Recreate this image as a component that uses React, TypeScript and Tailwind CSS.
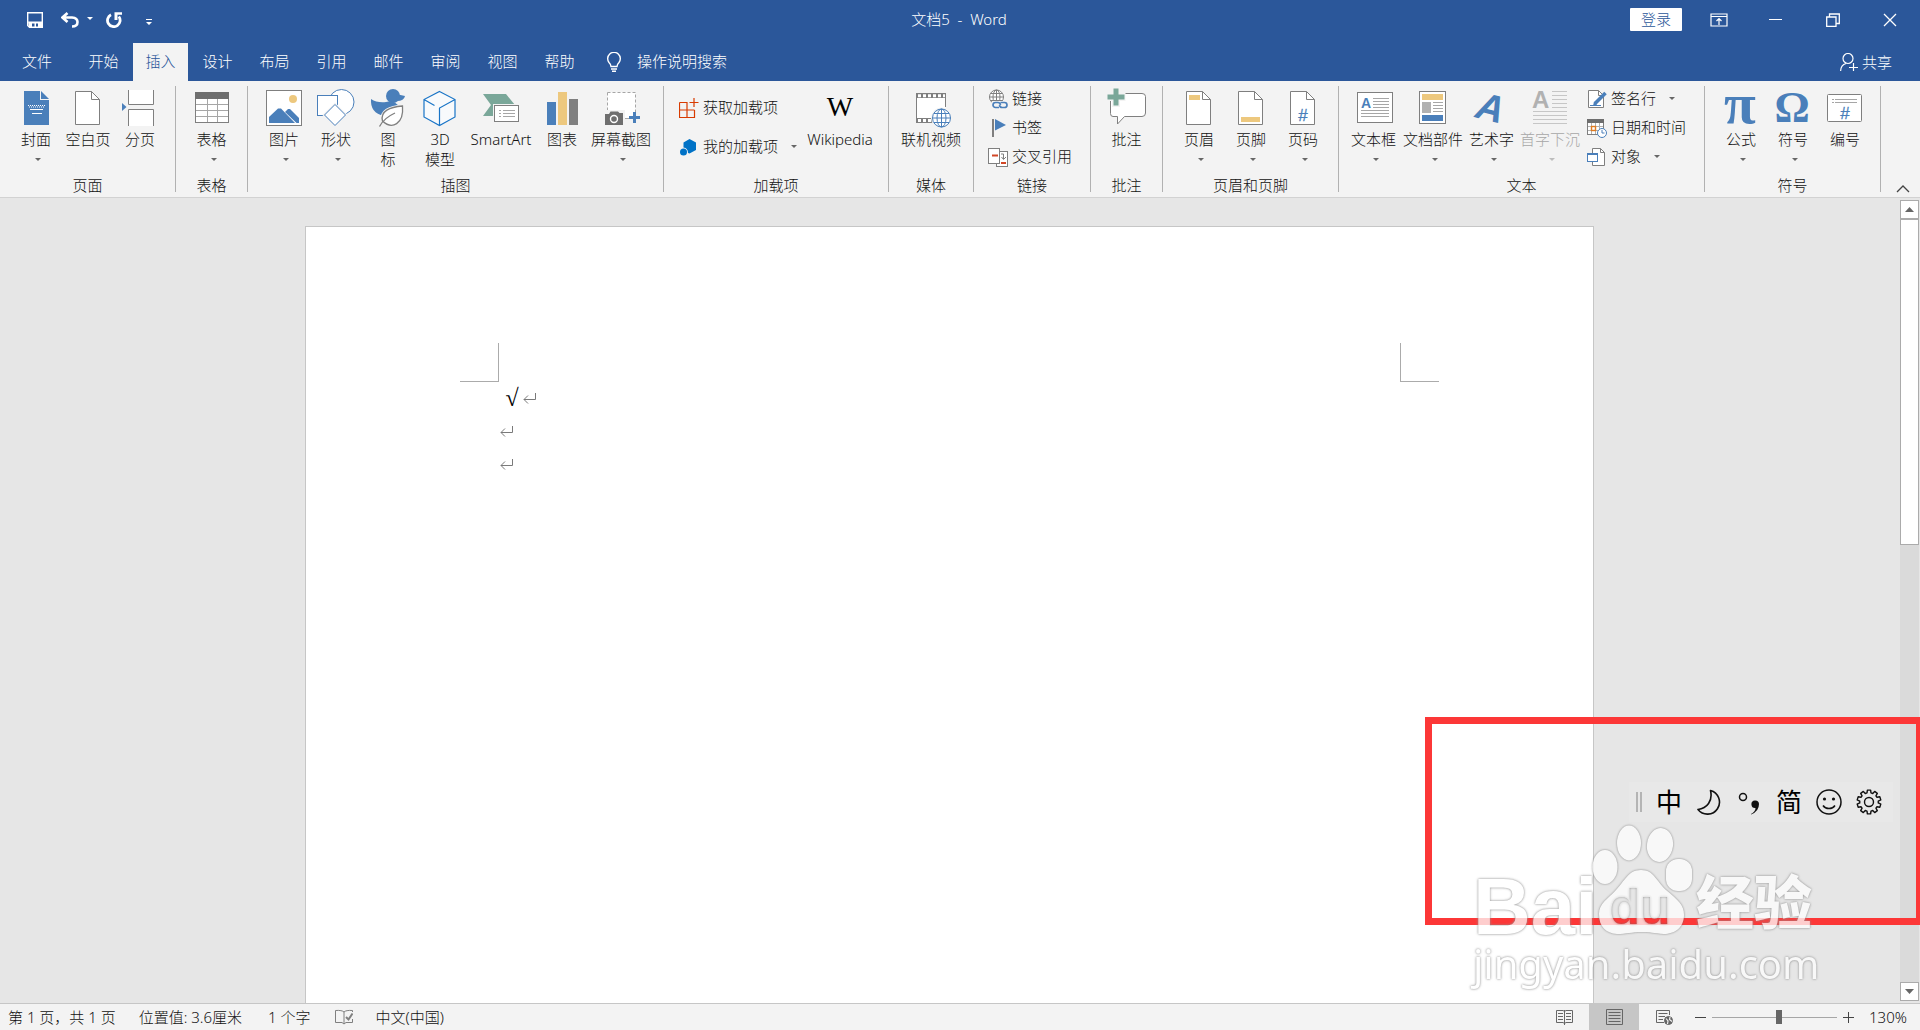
import React, { useState } from "react";

const BLUE = "#4a7fba";
const GREY = "#7f7f7f";
const GOLD = "#edc87e";
const GREEN = "#7aa799";

function Ico({ children }: { children: React.ReactNode }) {
  return (
    <svg viewBox="0 0 40 40" className="h-10 w-10 shrink-0 overflow-visible" fill="none" aria-hidden="true">
      {children}
    </svg>
  );
}

function SmallIco({ children }: { children: React.ReactNode }) {
  return (
    <svg viewBox="0 0 20 20" className="h-5 w-5 shrink-0" fill="none" aria-hidden="true">
      {children}
    </svg>
  );
}

function Caret({ light = false }: { light?: boolean }) {
  return (
    <svg viewBox="0 0 6 3" className="h-[3px] w-1.5 shrink-0" aria-hidden="true">
      <path d="M0 0h6L3 3z" fill={light ? "#bdbdbd" : "#666"} />
    </svg>
  );
}

function BigButton({
  icon,
  label,
  width = "w-[52px]",
  caret = false,
  disabled = false,
}: {
  icon: React.ReactNode;
  label: React.ReactNode;
  width?: string;
  caret?: boolean;
  disabled?: boolean;
}) {
  return (
    <button
      type="button"
      disabled={disabled}
      className={`${width} flex shrink-0 flex-col items-center self-start pt-1.5 leading-5 whitespace-nowrap ${
        disabled ? "text-[#a6a6a6]" : ""
      }`}
    >
      {icon}
      <span className="mt-0.5">{label}</span>
      {caret && (
        <span className="mt-[9px] flex pl-1">
          <Caret light={disabled} />
        </span>
      )}
    </button>
  );
}

function SmallButton({ icon, label, caret = false }: { icon: React.ReactNode; label: string; caret?: boolean }) {
  return (
    <button type="button" className="flex h-[29px] items-center whitespace-nowrap">
      {icon}
      <span className="ml-1">{label}</span>
      {caret && (
        <span className="ml-[13px] flex">
          <Caret />
        </span>
      )}
    </button>
  );
}

function Group({
  title,
  width,
  align = "pl-2.5",
  children,
}: {
  title: string;
  width: string;
  align?: string;
  children: React.ReactNode;
}) {
  return (
    <>
      <section aria-label={title} className={`${width} flex shrink-0 flex-col pb-0.5`}>
        <div className={`flex min-h-[94px] ${align}`}>{children}</div>
        <div className="text-center leading-5">{title}</div>
      </section>
      <div className="my-[5px] w-px shrink-0 bg-[#b1b1b1]" />
    </>
  );
}

function PageShape({ children }: { children?: React.ReactNode }) {
  return (
    <Ico>
      <path d="M7.500 4.500H23.500L31.500 12.500V37.500H7.500Z" fill="#fff" stroke={GREY} />
      <path d="M23.500 4.500V12.500H31.500" stroke={GREY} />
      {children}
    </Ico>
  );
}

const coverIcon = (
  <Ico>
    <path d="M8 4H24V13H33V38H8Z" fill={BLUE} />
    <path d="M25 4L33 12H25Z" fill={BLUE} />
    <path d="M12 18.500H29M13 20H29" stroke="#fff" strokeDasharray="1 1" />
    <path d="M14 22.500H27M16 26.500H26" stroke="#fff" />
  </Ico>
);

const breakIcon = (
  <Ico>
    <path d="M2 16L6.500 20L2 24Z" fill={BLUE} />
    <path d="M8 3H34V18H8Z" fill="#fff" />
    <path d="M8.500 3V17.500H33.500V3M8.500 39V22.500H33.500V39" fill="#fff" stroke={GREY} />
  </Ico>
);

const tableIcon = (
  <Ico>
    <rect x="3.500" y="5.500" width="33" height="30" fill="#fff" stroke={GREY} />
    <rect x="3" y="5" width="34" height="7" fill="#6e6e6e" />
    <path d="M4 17.500H36M4 23.500H36M4 29.500H36M15.500 12V35M25.500 12V35" stroke="#a6a6a6" />
  </Ico>
);

const pictureIcon = (
  <Ico>
    <rect x="2.500" y="3.500" width="35" height="35" fill="#fff" stroke={GREY} />
    <circle cx="29" cy="12" r="4" fill={GOLD} />
    <path d="M5 36V30L14 21.500H17L31 36Z" fill={BLUE} />
    <path d="M21 25L24 22H26L35 31V36H32.500Z" fill={BLUE} />
  </Ico>
);

const shapesIcon = (
  <Ico>
    <circle cx="25.500" cy="15" r="12.500" fill="#fff" stroke={BLUE} />
    <rect x="1.500" y="8.500" width="20" height="20" fill="#fff" stroke={BLUE} />
    <path d="M19 17.500L29.500 28L19 38.500L8.500 28Z" fill="#fff" stroke="#f3f3f3" strokeWidth="3" />
    <path d="M19 17.500L29.500 28L19 38.500L8.500 28Z" fill="#fff" stroke={BLUE} />
  </Ico>
);

const iconsIcon = (
  <Ico>
    <circle cx="25" cy="9" r="7" fill={BLUE} />
    <path d="M28 7L37 9Q36 14 29 14Z" fill={BLUE} />
    <path d="M3 12Q9 16 18 15L23 14Q32 16 30 24Q26 30 16 29Q2 26 3 12Z" fill={BLUE} />
    <path d="M34.500 19C22 20 12 24 14.500 34C24 43 36 37 34.500 19Z" fill="#fff" stroke="#f3f3f3" strokeWidth="3" />
    <path d="M34.500 19C22 20 12 24 14.500 34C24 43 36 37 34.500 19Z" fill="#fff" stroke={GREY} strokeWidth="1.300" />
    <path d="M11.500 39.500Q16 31 27 26" stroke={GREY} strokeWidth="1.300" />
  </Ico>
);

const cubeIcon = (
  <Ico>
    <path
      d="M19.500 4.500L35 12.500V30L19.500 38.500L4 30V12.500ZM4 12.500L14.500 18.500M19.500 38.500V21L35 12.500"
      stroke="#1a75c7"
      strokeWidth="1.200"
      fill="#f8fafc"
    />
  </Ico>
);

const smartArtIcon = (
  <Ico>
    <path d="M2 7H25L34 18L25 29H2L10 18Z" fill={GREEN} />
    <rect x="12" y="17" width="27" height="19" fill="#f3f3f3" />
    <rect x="13.500" y="18.500" width="24" height="16" fill="#fff" stroke={GREY} />
    <path d="M18 23.500H20M22 23.500H34M18 26.500H20M22 26.500H34M18 29.500H20M22 29.500H34" stroke="#a6a6a6" />
  </Ico>
);

const chartIcon = (
  <Ico>
    <rect x="5" y="15" width="9" height="23" fill={BLUE} />
    <rect x="16" y="5" width="9" height="33" fill={GOLD} />
    <rect x="27" y="12" width="9" height="26" fill={GREY} />
  </Ico>
);

const screenshotIcon = (
  <Ico>
    <rect x="6.500" y="5.500" width="28" height="26" fill="#fff" stroke="#a6a6a6" strokeDasharray="3 2" />
    <path d="M3 23H24V32H40V40H3Z" fill="#f3f3f3" />
    <path d="M4 27H8L9.500 24.500H17L18.500 26H22V38H4Z" fill="#6e6e6e" />
    <circle cx="13" cy="32" r="3.500" stroke="#fff" strokeWidth="1.400" />
    <path d="M28 30.500H39M33.500 25V36" stroke={BLUE} strokeWidth="3" />
    <path d="M24 31.500H27" stroke="#a6a6a6" />
  </Ico>
);

const wikiIcon = (
  <span aria-hidden="true" className="flex h-10 items-center font-['Liberation_Serif',serif] text-[28px] leading-10 text-black">
    W
  </span>
);

const videoIcon = (
  <Ico>
    <rect x="5.500" y="6.500" width="29" height="29" fill="#fff" />
    <path d="M5 6H35V11H5ZM5 31H24V36H5Z" fill={GREY} />
    <path d="M5.500 6V36M34.500 6V20" stroke={GREY} />
    <path d="M7 8.700H34M7 33.500H22" stroke="#fff" strokeWidth="3" strokeDasharray="3 2" />
    <circle cx="30.500" cy="31" r="10.500" fill="#f3f3f3" />
    <g stroke={BLUE}>
      <circle cx="30.500" cy="31" r="9" fill="#fff" />
      <ellipse cx="30.500" cy="31" rx="4.500" ry="9" />
      <path d="M30.500 22V40M21.500 31H39.500M23 26.500H38M23 35.500H38" />
    </g>
  </Ico>
);

const commentIcon = (
  <Ico>
    <path d="M6 6.500H35Q38.500 6.500 38.500 9.500V26Q38.500 29.500 35 29.500H17.500L10.500 37V29.500H6Q3.500 29.500 3.500 26.500V9Z" fill="#fff" stroke={GREY} />
    <path d="M0 10H18.500M9 0V20" stroke="#f3f3f3" strokeWidth="8" />
    <path d="M.5 10H17.500M9 1.500V18.500" stroke={GREEN} strokeWidth="5" />
  </Ico>
);

const iconText = "font-['Liberation_Sans',sans-serif]";

const textBoxIcon = (
  <Ico>
    <rect x="3.500" y="5.500" width="35" height="30" fill="#fff" stroke={GREY} />
    <text x="7" y="21" fontSize="14" fontWeight="bold" fill={BLUE} className={iconText}>A</text>
    <path d="M19 11.500H35M19 14.500H35M19 17.500H35M19 20.500H35M7 23.500H35M7 26.500H35M7 29.500H35" stroke="#a6a6a6" />
  </Ico>
);

const partsIcon = (
  <Ico>
    <rect x="6.500" y="4.500" width="26" height="32" fill="#fff" stroke={GREY} />
    <rect x="9" y="7" width="21" height="6" fill={GOLD} />
    <rect x="9" y="15" width="9" height="11" fill="#b1b1b1" />
    <path d="M20 15.500H30M20 18.500H30M20 21.500H30M20 24.500H30" stroke="#a6a6a6" />
    <rect x="9" y="28" width="21" height="6" fill={BLUE} />
  </Ico>
);

const wordArtIcon = (
  <Ico>
    <g transform="rotate(14 20 20)">
      <text x="5" y="34" fontSize="38" fontWeight="bold" fontStyle="italic" fill={BLUE} className={iconText}>A</text>
    </g>
  </Ico>
);

const dropCapIcon = (
  <Ico>
    <text x="2" y="21" fontSize="24" fontWeight="bold" fill="#b1b1b1" className={iconText}>A</text>
    <path d="M22 4.500H37M22 8.500H37M22 12.500H37M22 16.500H37M22 20.500H37M3 24.500H37M3 28.500H37M3 32.500H37M3 36.500H37" stroke="#c6c6c6" />
  </Ico>
);

const serifText = "font-['Liberation_Serif',serif]";

const piIcon = (
  <Ico>
    <text x="19" y="36" textAnchor="middle" fontSize="58" fontWeight="bold" fill={BLUE} className={serifText}>π</text>
  </Ico>
);

const omegaIcon = (
  <Ico>
    <text x="19" y="35" textAnchor="middle" fontSize="44" fontWeight="bold" fill={BLUE} className={serifText}>Ω</text>
  </Ico>
);

const numberIcon = (
  <Ico>
    <rect x="2.500" y="7.500" width="34" height="27" rx="1" fill="#fff" stroke={GREY} />
    <path d="M7 12.500H32M7 15.500H32" stroke="#a6a6a6" strokeDasharray="2 1 40 0" />
    <text x="20" y="32" textAnchor="middle" fontSize="17" fill={BLUE} stroke={BLUE} strokeWidth=".3" className={iconText}>#</text>
  </Ico>
);

const getAddinIcon = (
  <SmallIco>
    <path d="M.5 4.500H8V19.500M.5 4.500V19.500H15.500V12M.5 12H15.500M15 0V9M10.500 4.500H19.500" stroke="#d83b01" strokeWidth="1.200" />
  </SmallIco>
);

const myAddinIcon = (
  <SmallIco>
    <path d="M10.500 2L17 5.500V13L10.500 16.500L9 16Q9 11 4.500 10.500V5.500Z" fill="#0072c6" />
    <circle cx="4.500" cy="15" r="3.500" fill="#0072c6" />
  </SmallIco>
);

const linkIcon = (
  <SmallIco>
    <g stroke={GREY}>
      <circle cx="8.500" cy="8" r="7" fill="#fff" />
      <ellipse cx="8.500" cy="8" rx="3.500" ry="7" />
      <path d="M1.500 8H15.500M8.500 1V15M3 4.500H14M3 11.500H14" />
    </g>
    <rect x="4" y="12" width="16" height="8" fill="#f3f3f3" />
    <path d="M11 18.500H7.500A2.500 2.500 0 0 1 7.500 13.500H10Q12 13.500 12.500 16M12.500 13.500H16.500A2.500 2.500 0 0 1 16.500 18.500H14Q12 18.500 11.500 16" stroke={BLUE} strokeWidth="1.700" />
  </SmallIco>
);

const bookmarkIcon = (
  <SmallIco>
    <rect x="4" y="1" width="2" height="18" fill={GREY} />
    <path d="M7 1L18 7L7 12.500Z" fill={BLUE} />
  </SmallIco>
);

const crossRefIcon = (
  <SmallIco>
    <rect x="8.500" y="4.500" width="11" height="15" fill="#fff" stroke={GREY} />
    <rect x=".5" y="1.500" width="11" height="15" fill="#fff" stroke={GREY} />
    <path d="M4 8.500H10M13 16H18" stroke="#d24726" strokeWidth="2" />
    <path d="M13 7H15.500V12M13.500 10L15.500 12.500L18 10" stroke={GREY} />
  </SmallIco>
);

const signIcon = (
  <SmallIco>
    <path d="M1.500 1.500H11.500L16.500 6.500V18.500H1.500Z" fill="#fff" stroke={GREY} />
    <path d="M11.500 1.500V6.500H16.500" stroke={GREY} />
    <path d="M18.500 4L8 14.500" stroke={BLUE} strokeWidth="3.500" />
    <path d="M6 17L7 12.500L10 15.500Z" fill={BLUE} />
    <path d="M3 16.500H14" stroke={BLUE} />
  </SmallIco>
);

const dateIcon = (
  <SmallIco>
    <rect x=".5" y="1.500" width="16" height="15" fill="#fff" stroke={GREY} />
    <rect x="0" y="1" width="17" height="4" fill="#6e6e6e" />
    <path d="M4.500 5V16M8.500 5V16M12.500 5V16M1 8.500H16M1 12.500H16" stroke="#b1b1b1" />
    <rect x="4.500" y="8.500" width="4" height="4" fill="#fff" stroke="#e07b20" strokeWidth="1.400" />
    <circle cx="15" cy="15" r="4.500" fill="#fff" stroke={BLUE} />
    <path d="M15 12V15H17.500" stroke={BLUE} />
  </SmallIco>
);

const objectIcon = (
  <SmallIco>
    <path d="M5.500 1.500H13.500L17.500 5.500V18.500H5.500Z" fill="#fff" stroke={GREY} />
    <path d="M13.500 1.500V5.500H17.500" stroke={GREY} />
    <rect x=".5" y="6.500" width="10" height="8" fill="#fff" stroke={BLUE} />
    <rect x="0" y="6" width="11" height="2" fill={BLUE} />
  </SmallIco>
);

function TitleBar() {
  const chrome = "flex h-full w-[57px] items-center justify-center";
  return (
    <header className="grid h-[43px] grid-cols-[1fr_auto_1fr] items-center pr-0.5 pb-1 text-white">
      <div className="flex items-center pl-[27px]">
        <button type="button" aria-label="保存">
          <svg viewBox="0 0 16 16" className="h-4 w-4" fill="none">
            <path d="M.7.7H15.300V15.300H2.500L.7 13.500Z" stroke="#fff" strokeWidth="1.400" />
            <path d="M1 9.500H15V15H11V11.500H9V15H7.500V11.500H5V15H2Z" fill="#fff" />
          </svg>
        </button>
        <button type="button" aria-label="撤消" className="ml-[18px]">
          <svg viewBox="0 0 18 16" className="h-4 w-[18px]" fill="none">
            <path d="M6.500 1L1.500 5.500L6.500 10M2 5.500H11Q16.500 6 16.500 10Q16.500 14.500 11 14.500" stroke="#fff" strokeWidth="2.600" />
          </svg>
        </button>
        <button type="button" aria-label="撤消列表" className="ml-2 pb-0.5">
          <svg viewBox="0 0 6 3" className="h-[3px] w-1.5"><path d="M0 0h6L3 3z" fill="#fff" /></svg>
        </button>
        <button type="button" aria-label="重复" className="ml-[13px]">
          <svg viewBox="0 0 16 16" className="h-4 w-4" fill="none">
            <path d="M5 2.700A6.300 6.300 0 1 0 12.800 4.500" stroke="#fff" strokeWidth="2.800" />
            <path d="M8.500 8V.3H16V2.800H11.500V8Z" fill="#fff" />
          </svg>
        </button>
        <button type="button" aria-label="自定义快速访问工具栏" className="ml-6 pt-1">
          <svg viewBox="0 0 6 6" className="h-1.5 w-1.5"><path d="M0 0h6v1H0zM0 3h6L3 6z" fill="#fff" /></svg>
        </button>
      </div>
      <h1 className="whitespace-pre">文档5  -  Word</h1>
      <div className="flex h-full items-center justify-end">
        <button type="button" className="mr-2 h-[23px] w-[52px] rounded-[1px] bg-white leading-[23px] text-[#2b579a]">登录</button>
        <button type="button" aria-label="功能区显示选项" className={chrome}>
          <svg viewBox="0 0 18 14" className="h-3.5 w-[18px]" fill="none" stroke="#fff">
            <path d="M1 1H17V13H1ZM1 3.500H17M9 12V6M6.500 8L9 5.500L11.500 8" strokeWidth="1.200" />
          </svg>
        </button>
        <button type="button" aria-label="最小化" className={chrome}>
          <span className="h-px w-[13px] bg-white" />
        </button>
        <button type="button" aria-label="还原" className={chrome}>
          <svg viewBox="0 0 14 14" className="h-3.5 w-3.5" fill="none" stroke="#fff">
            <path d="M.7 4H10V13.300H.7ZM3.500 4V1H13.300V10.500H10" strokeWidth="1.300" />
          </svg>
        </button>
        <button type="button" aria-label="关闭" className={chrome}>
          <svg viewBox="0 0 14 14" className="h-3.5 w-3.5" fill="none" stroke="#fff">
            <path d="M1 1L13 13M13 1L1 13" strokeWidth="1.300" />
          </svg>
        </button>
      </div>
    </header>
  );
}

const tabs = ["开始", "插入", "设计", "布局", "引用", "邮件", "审阅", "视图", "帮助"];

function TabRow() {
  return (
    <nav className="flex h-[38px] gap-0.5 text-white">
      <button type="button" className="w-[74px] pb-0.5">文件</button>
      {tabs.map((tab) => (
        <button
          key={tab}
          type="button"
          className={tab === "插入" ? "w-[55px] bg-[#f3f3f3] pb-0.5 text-[#2b579a]" : "w-[55px] pb-0.5"}
        >
          {tab}
        </button>
      ))}
      <button type="button" className="ml-[17px] flex items-center gap-[15px] pb-0.5">
        <svg viewBox="0 0 16 20" className="mt-0.5 h-5 w-4" fill="none" stroke="#fff">
          <path d="M5 14.500Q5 12.500 3 10.500A6.300 6.300 0 1 1 13 10.500Q11 12.500 11 14.500Z" strokeWidth="1.400" />
          <path d="M5 17H11M6 19.300H10" strokeWidth="1.400" />
        </svg>
        <span>操作说明搜索</span>
      </button>
      <button type="button" className="mr-7 ml-auto flex items-center gap-1">
        <svg viewBox="0 0 18 18" className="h-[18px] w-[18px]" fill="none" stroke="#fff">
          <circle cx="8" cy="5.500" r="5" strokeWidth="1.200" />
          <path d="M.6 18Q.8 12 6 10.500M13.500 10V18M9 14.500H18" strokeWidth="1.200" />
        </svg>
        <span>共享</span>
      </button>
    </nav>
  );
}

function Ribbon() {
  return (
    <div className="flex overflow-hidden border-b border-[#d2d2d2] bg-[#f3f3f3]">
      <Group title="页面" width="w-[175px]">
        <BigButton icon={coverIcon} label="封面" caret />
        <BigButton icon={<PageShape />} label="空白页" />
        <BigButton icon={breakIcon} label="分页" />
      </Group>
      <Group title="表格" width="w-[71px]" align="justify-center">
        <BigButton icon={tableIcon} label="表格" caret />
      </Group>
      <Group title="插图" width="w-[415px]">
        <BigButton icon={pictureIcon} label="图片" caret />
        <BigButton icon={shapesIcon} label="形状" caret />
        <BigButton icon={iconsIcon} label={<>图<br />标</>} />
        <BigButton icon={cubeIcon} label={<>3D<br />模型</>} />
        <BigButton icon={smartArtIcon} label="SmartArt" width="w-[70px]" />
        <BigButton icon={chartIcon} label="图表" />
        <BigButton icon={screenshotIcon} label="屏幕截图" width="w-[66px]" caret />
      </Group>
      <Group title="加载项" width="w-[224px]" align="pl-[15px]">
        <div className="flex flex-col gap-2.5 pt-3">
          <SmallButton icon={getAddinIcon} label="获取加载项" />
          <SmallButton icon={myAddinIcon} label="我的加载项" caret />
        </div>
        <BigButton icon={wikiIcon} label="Wikipedia" width="ml-0.5 w-[82px]" />
      </Group>
      <Group title="媒体" width="w-[84px]" align="justify-center">
        <BigButton icon={videoIcon} label="联机视频" width="w-16" />
      </Group>
      <Group title="链接" width="w-[116px]" align="pl-3.5">
        <div className="flex flex-col pt-[3px]">
          <SmallButton icon={linkIcon} label="链接" />
          <SmallButton icon={bookmarkIcon} label="书签" />
          <SmallButton icon={crossRefIcon} label="交叉引用" />
        </div>
      </Group>
      <Group title="批注" width="w-[71px]" align="justify-center">
        <BigButton icon={commentIcon} label="批注" />
      </Group>
      <Group title="页眉和页脚" width="w-[175px]">
        <BigButton icon={<PageShape><rect x="10" y="8" width="11" height="5" fill={GOLD} /></PageShape>} label="页眉" caret />
        <BigButton icon={<PageShape><rect x="10" y="30" width="19" height="5" fill={GOLD} /></PageShape>} label="页脚" caret />
        <BigButton
          icon={
            <PageShape>
              <text x="20" y="34" textAnchor="middle" fontSize="17" fill={BLUE} stroke={BLUE} strokeWidth=".3" className={iconText}>#</text>
            </PageShape>
          }
          label="页码"
          caret
        />
      </Group>
      <Group title="文本" width="w-[365px]" align="pl-[5px]">
        <BigButton icon={textBoxIcon} label="文本框" width="w-[59px]" caret />
        <BigButton icon={partsIcon} label="文档部件" width="w-[60px]" caret />
        <BigButton icon={wordArtIcon} label="艺术字" width="w-[57px]" caret />
        <BigButton icon={dropCapIcon} label="首字下沉" width="w-[60px]" caret disabled />
        <div className="ml-[7px] flex flex-col pt-[3px]">
          <SmallButton icon={signIcon} label="签名行" caret />
          <SmallButton icon={dateIcon} label="日期和时间" />
          <SmallButton icon={objectIcon} label="对象" caret />
        </div>
      </Group>
      <Group title="符号" width="w-[175px]">
        <BigButton icon={piIcon} label="公式" caret />
        <BigButton icon={omegaIcon} label="符号" caret />
        <BigButton icon={numberIcon} label="编号" />
      </Group>
      <button type="button" aria-label="折叠功能区" className="mr-2.5 mb-1 ml-auto self-end">
        <svg viewBox="0 0 14 8" className="h-2 w-3.5" fill="none">
          <path d="M1 7L7 1L13 7" stroke="#444" strokeWidth="1.300" />
        </svg>
      </button>
    </div>
  );
}

function ParagraphMark() {
  return (
    <svg viewBox="0 0 13 11" className="h-[11px] w-[13px]" fill="none" aria-hidden="true">
      <path d="M12.500 0V6.500H1M5 2.500L1 6.500L5 10.500" stroke="#7a7a7a" />
    </svg>
  );
}

function DocumentArea() {
  return (
    <main className="flex min-h-0 flex-1 bg-[#e6e6e6] pr-px">
      <div className="flex min-w-0 flex-1 justify-center pt-7 pr-0.5">
        <article className="w-[1289px] border border-b-0 border-[#c6c6c6] bg-white px-[154px] pt-[116px]">
          <div className="flex justify-between">
            <div className="h-[39px] w-[39px] border-r border-b border-[#ababab]" />
            <div className="h-[39px] w-[39px] border-b border-l border-[#ababab]" />
          </div>
          <div className="pl-10">
            <p className="flex h-8 items-center pl-1.5 text-black">
              <span className="w-[17px] font-['Liberation_Serif',serif] text-[24px] leading-8 font-bold">√</span>
              <ParagraphMark />
            </p>
            <p className="flex h-[34px] items-center"><ParagraphMark /></p>
            <p className="flex h-8 items-center"><ParagraphMark /></p>
          </div>
        </article>
      </div>
      <div className="my-0.5 flex w-[19px] shrink-0 flex-col bg-[#dadada]">
        <button type="button" aria-label="向上滚动" className="flex h-[19px] items-center justify-center border border-[#ababab] bg-white">
          <svg viewBox="0 0 9 5" className="h-[5px] w-[9px]"><path d="M0 5h9L4.500 0z" fill="#666" /></svg>
        </button>
        <div className="h-[326px] border border-[#ababab] bg-white" />
        <button type="button" aria-label="向下滚动" className="mt-auto flex h-[19px] items-center justify-center border border-[#ababab] bg-white">
          <svg viewBox="0 0 9 5" className="h-[5px] w-[9px]"><path d="M0 0h9L4.500 5z" fill="#666" /></svg>
        </button>
      </div>
    </main>
  );
}

function StatusBar() {
  const [zoom, setZoom] = useState(54);
  return (
    <footer className="flex h-[27px] items-center border-t border-[#c6c6c6] bg-[#f3f3f3] pl-2 whitespace-nowrap">
      <span>第 1 页，共 1 页</span>
      <span className="ml-[23px]">位置值: 3.6厘米</span>
      <span className="ml-[26px]">1 个字</span>
      <button type="button" aria-label="校对" className="ml-6">
        <svg viewBox="0 0 18 16" className="h-4 w-[18px]" fill="none" stroke={GREY}>
          <path d="M9 3Q7 1 .5 1.500V13.500H7L9 15L11 13.500H17.500V10M9 3V15M9 3Q11 1 17.500 1.500V3" />
          <path d="M11 8L13.500 10.500L17.500 4.500" strokeWidth="2" />
        </svg>
      </button>
      <span className="ml-[23px]">中文(中国)</span>
      <div className="ml-auto flex h-full items-center">
        <button type="button" aria-label="阅读视图" className="flex h-full w-[50px] items-center justify-center">
          <svg viewBox="0 0 17 16" className="h-4 w-[17px]" fill="none" stroke="#666">
            <path d="M8.500 2.500L7 1.500H.5V13.500H7L8.500 14.500L10 13.500H16.500V1.500H10ZM8.500 1V16" />
            <path d="M2 4.500H7M2 7.500H7M2 10.500H7M10 4.500H15M10 7.500H15M10 10.500H15" />
          </svg>
        </button>
        <button type="button" aria-label="页面视图" className="flex h-full w-[50px] items-center justify-center bg-[#c6c6c6]">
          <svg viewBox="0 0 17 16" className="h-4 w-[17px]" fill="none" stroke="#666">
            <path d="M.5.5H16.500V15.500H.5ZM2.500 3.500H14.500M2.500 6.500H14.500M2.500 9.500H14.500M2.500 12.500H14.500" />
          </svg>
        </button>
        <button type="button" aria-label="Web 版式视图" className="flex h-full w-[50px] items-center justify-center">
          <svg viewBox="0 0 17 16" className="h-4 w-[17px]" fill="none" stroke="#666">
            <path d="M8 13.500H.5V1.500H13.500V6M2.500 4.500H11.500M2.500 7.500H9M2.500 10.500H7" />
            <circle cx="12.500" cy="11.500" r="4" fill="#666" />
            <path d="M10 9.500L12 12L11.500 15M14 8L13.500 10.500L16 12.500" stroke="#f3f3f3" strokeWidth="1.200" />
          </svg>
        </button>
        <button type="button" aria-label="缩小" className="ml-1.5 flex h-full w-[11px] items-center"><span className="h-px w-full bg-[#444]" /></button>
        <input
          type="range"
          aria-label="显示比例"
          min={0}
          max={100}
          value={zoom}
          onChange={(e) => setZoom(Number(e.target.value))}
          className="mx-1.5 h-3.5 w-[125px] appearance-none bg-[linear-gradient(#a6a6a6,#a6a6a6)] bg-[length:100%_1px] bg-center bg-no-repeat [&::-webkit-slider-thumb]:h-3.5 [&::-webkit-slider-thumb]:w-1.5 [&::-webkit-slider-thumb]:appearance-none [&::-webkit-slider-thumb]:bg-[#666]"
        />
        <button type="button" aria-label="放大" className="flex h-full w-[11px] items-center">
          <svg viewBox="0 0 11 11" className="h-[11px] w-[11px]"><path d="M0 5h5V0h1v5h5v1H6v5H5V6H0z" fill="#444" /></svg>
        </button>
        <span className="w-[66px] pl-0.5 text-center">130%</span>
      </div>
    </footer>
  );
}

function gearPath() {
  const pts: string[] = [];
  for (let i = 0; i < 10; i++) {
    const steps: [number, number][] = [[-0.24, 9.3], [-0.15, 12], [0.15, 12], [0.24, 9.3]];
    steps.forEach(([d, r]) => {
      const a = (i * Math.PI) / 5 + d * 0.9;
      pts.push(`${(13 + r * Math.sin(a)).toFixed(2)} ${(13 - r * Math.cos(a)).toFixed(2)}`);
    });
  }
  return `M${pts.join("L")}Z`;
}

function ImeBar() {
  const slot = "flex h-full w-10 items-center justify-center";
  const art = "h-[26px] w-[26px]";
  return (
    <div className="absolute right-[27px] bottom-[208px] flex h-10 items-center bg-[#e8e8e8] pr-1 pl-[7px] text-[26px] font-normal text-black">
      <span className="mr-[7px] h-5 w-1.5 border-x-2 border-[#b4b4b4]" />
      <button type="button" className={slot}>中</button>
      <button type="button" aria-label="半角" className={slot}>
        <svg viewBox="0 0 26 26" className={art} fill="none" stroke="#111" strokeWidth="1.600">
          <path d="M14.500 1.500A12 12 0 1 1 2 20.500C11 19.500 17 12 14.500 1.500Z" strokeLinejoin="round" />
        </svg>
      </button>
      <button type="button" aria-label="中文标点" className={slot}>
        <svg viewBox="0 0 26 26" className={art} fill="none">
          <circle cx="7" cy="8" r="3.500" stroke="#111" strokeWidth="1.500" />
          <path d="M15 25Q19.500 22.500 19.500 19A3.800 3.800 0 1 1 23 15Q23 22.500 15 25.500Z" fill="#111" />
        </svg>
      </button>
      <button type="button" className={slot}>简</button>
      <button type="button" aria-label="表情" className={slot}>
        <svg viewBox="0 0 26 26" className={art} fill="none" stroke="#111" strokeWidth="1.500">
          <circle cx="13" cy="13" r="12" />
          <path d="M7 16.500Q9 19.500 13 19.500T19 16.500" />
          <circle cx="8.500" cy="10" r="1.600" fill="#111" stroke="none" />
          <circle cx="17.500" cy="10" r="1.600" fill="#111" stroke="none" />
        </svg>
      </button>
      <button type="button" aria-label="设置" className={slot}>
        <svg viewBox="0 0 26 26" className={art} fill="none" stroke="#111" strokeWidth="1.400" strokeLinejoin="round">
          <path d={gearPath()} />
          <circle cx="13" cy="13" r="4.500" />
        </svg>
      </button>
    </div>
  );
}

function Watermark() {
  const duFont = "font-['Liberation_Sans',sans-serif]";
  return (
    <div className="pointer-events-none absolute right-[102px] bottom-9 flex w-[345px] flex-col text-white opacity-75 [text-shadow:0_0_2px_#888,0_0_3px_#999]">
      <div className="flex items-end">
        <span className="w-[117px] font-['Liberation_Sans',sans-serif] text-[80px] leading-[54px] font-bold">Bai</span>
        <svg viewBox="0 0 102 114" className="h-[114px] w-[102px] overflow-visible">
          <mask id="du-cutout" maskUnits="userSpaceOnUse" x="0" y="40" width="102" height="76">
            <rect x="0" y="40" width="102" height="76" fill="#fff" />
            <text x="50" y="104" textAnchor="middle" fontSize="50" fontWeight="bold" fill="#000" className={duFont}>du</text>
          </mask>
          <g fill="#fff" className="[filter:drop-shadow(0_0_1px_#666)]">
            <ellipse cx="15" cy="47" rx="12.500" ry="17" />
            <ellipse cx="39" cy="23" rx="12" ry="17.500" />
            <ellipse cx="70" cy="25" rx="13" ry="17" transform="rotate(8 70 25)" />
            <rect x="76" y="39" width="26" height="32" rx="12" />
            <path
              mask="url(#du-cutout)"
              d="M51 50C64 50 66 61 76 70C88 80 94 85 94 95C94 108 84 114 74 114C64 113 60 112 51 112C42 112 36 114 27 114C16 113 9 107 9 94C9 83 18 79 26 70C35 61 38 50 51 50Z"
            />
          </g>
        </svg>
        <span className="ml-1 w-[116px] text-[58px] leading-[64px] font-black whitespace-nowrap">经验</span>
      </div>
      <span className="text-[40px] leading-[60px] font-normal whitespace-nowrap">jingyan.baidu.com</span>
    </div>
  );
}

export default function App() {
  return (
    <div className="relative flex h-screen flex-col overflow-hidden bg-[#f3f3f3] font-['Noto_Sans','Noto_Sans_CJK_SC',sans-serif] text-[15px] font-light text-[#111]">
      <div className="bg-[#2b579a]">
        <TitleBar />
        <TabRow />
      </div>
      <Ribbon />
      <DocumentArea />
      <StatusBar />
      <ImeBar />
      <div className="pointer-events-none absolute -right-[3px] bottom-[105px] h-[208px] w-[498px] border-[7px] border-[#fc3737]" />
      <Watermark />
    </div>
  );
}
